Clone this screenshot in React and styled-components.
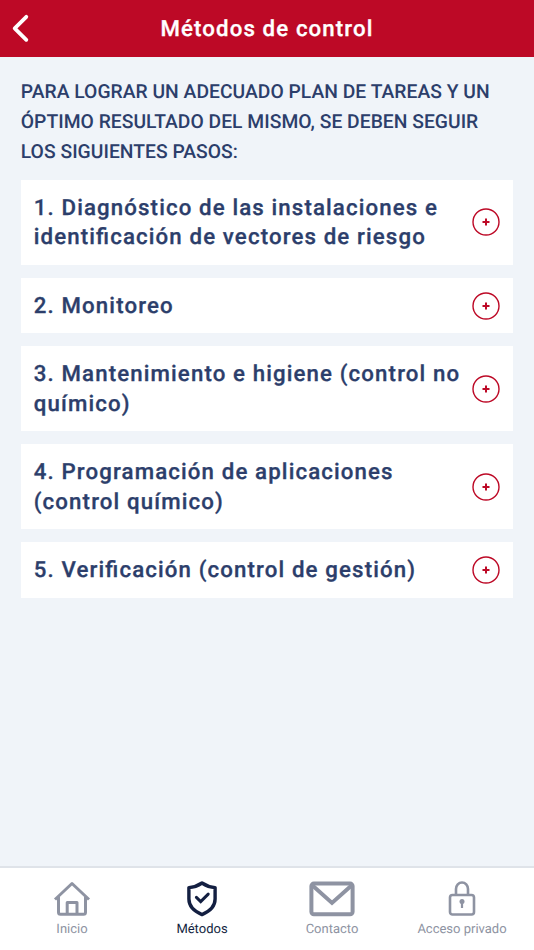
import React, { Component } from "react";
import styled, { createGlobalStyle } from "styled-components";

const GlobalStyle = createGlobalStyle`
  * {
    box-sizing: border-box;
  }
  body {
    margin: 0;
    font-family: Roboto, "Liberation Sans", sans-serif;
    text-rendering: geometricPrecision;
  }
`;
const Container = styled.div`
  display: flex;
  flex-direction: column;
  height: 100vh;
  background-color: #f0f4f9;
`;
const Header = styled.header`
  display: grid;
  grid-template-columns: 40px 1fr 40px;
  align-items: center;
  height: 57px;
  background-color: #bd0926;
  color: #fff;
`;
const BackButton = styled.button`
  display: flex;
  height: 57px;
  padding: 0;
  border: 0;
  background: none;
  color: inherit;
`;
const Title = styled.h1`
  margin: 0;
  padding-top: 1px;
  font-size: 22.25px;
  font-weight: 500;
  letter-spacing: 1.1px;
  text-align: center;
  -webkit-text-stroke: 0.3px;
`;
const Content = styled.main`
  flex: 1;
  padding: 20.2px 20.8px;
  color: #2c3e6b;
`;
const Intro = styled.p`
  margin: 0 0 13.5px;
  font-size: 19.3px;
  font-weight: 500;
  line-height: 29.67px;
  letter-spacing: 0.02px;
  text-transform: uppercase;
`;
const List = styled.div`
  display: flex;
  flex-direction: column;
  gap: 12.65px;
`;
const Card = styled.div`
  display: flex;
  align-items: center;
  justify-content: space-between;
  padding: 14px 13px 12px;
  background-color: #fff;
`;
const CardTitle = styled.h2`
  flex: 1;
  margin: 0;
  font-size: 22.25px;
  font-weight: 500;
  line-height: 29.67px;
  letter-spacing: 1.12px;
  font-feature-settings: "liga" 1;
  -webkit-text-stroke: 0.3px;
`;
const PlusButton = styled.button`
  display: flex;
  width: 28px;
  height: 28px;
  margin: -2px 0 0 9px;
  padding: 0;
  border: 0;
  background: none;
  color: #bd0926;
`;
const TabBar = styled.nav`
  display: grid;
  grid-template-columns: repeat(4, 130px);
  justify-content: center;
  height: 84px;
  border-top: 2px solid #dfe3e9;
  background-color: #fff;
`;
const Tab = styled.a`
  display: flex;
  flex-direction: column;
  align-items: center;
  padding-top: 12px;
  color: ${props => (props.$active ? "#131f41" : "#8e93a2")};
`;
const TabLabel = styled.span`
  margin-top: 3px;
  font-size: 13px;
  line-height: 18px;
`;

const HomeIcon = () => (
  <svg width="38" height="38" viewBox="0 0 38 38" fill="none" stroke="currentColor" strokeWidth="3">
    <path d="M2 19.5 19 3.5 36 19.5" strokeLinejoin="round" />
    <path d="M5.5 17v15.3q0 2 2 2h23q2 0 2-2V17" />
    <path d="M14.2 34V22.5h9.8V34" strokeLinejoin="round" />
  </svg>
);
const ShieldIcon = () => (
  <svg width="32" height="38" viewBox="0 0 32 38" fill="none" stroke="currentColor" strokeWidth="3.4">
    <path d="M16 3C11.5 6 7 7.3 2.9 7.6V19c0 7.2 5.5 12.4 13.1 15.6C23.6 31.4 29.1 26.2 29.1 19V7.6C25 7.3 20.5 6 16 3Z" strokeLinejoin="round" />
    <path d="m10.4 17.4 4.3 4.2 7.5-7.5" strokeWidth="3" strokeLinecap="round" />
  </svg>
);
const MailIcon = () => (
  <svg width="46" height="38" viewBox="0 0 46 38" fill="none" stroke="currentColor" strokeWidth="4">
    <rect x="2.4" y="3.6" width="41.2" height="30.6" rx="2.5" />
    <path d="m3.5 5.4 19.5 17.5 19.5-17.5" />
  </svg>
);
const LockIcon = () => (
  <svg width="28" height="38" viewBox="0 0 28 38" fill="none" stroke="currentColor" strokeWidth="2.6">
    <rect x="2" y="15" width="24" height="19.5" rx="2.5" />
    <path d="M8 15V9a6 6.5 0 0 1 12 0v6" />
    <circle cx="14" cy="21.6" r="2.5" fill="currentColor" stroke="none" />
    <path d="M14 21.6V28" strokeWidth="2.2" />
  </svg>
);

const steps = [
  "1. Diagnóstico de las instalaciones e identificación de vectores de riesgo",
  "2. Monitoreo",
  "3. Mantenimiento e higiene (control no químico)",
  "4. Programación de aplicaciones (control químico)",
  "5. Verificación (control de gestión)"
];

const tabs = [
  { label: "Inicio", Icon: HomeIcon },
  { label: "Métodos", Icon: ShieldIcon },
  { label: "Contacto", Icon: MailIcon },
  { label: "Acceso privado", Icon: LockIcon }
];

class App extends Component {
  constructor(props) {
    super(props);
    this.state = {
      tab: "Métodos"
    };
  }

  render() {
    return (
      <Container>
        <GlobalStyle />
        <Header>
          <BackButton>
            <svg width="40" height="57" viewBox="0 0 40 57" fill="none" stroke="currentColor" strokeWidth="3.8" strokeLinecap="round" strokeLinejoin="round">
              <path d="M26.3 16.8 14.7 28.3 26.3 39.8" />
            </svg>
          </BackButton>
          <Title>Métodos de control</Title>
        </Header>
        <Content>
          <Intro>Para lograr un adecuado plan de tareas y un óptimo resultado del mismo, se deben seguir los siguientes pasos:</Intro>
          <List>
            {steps.map(step => (
              <Card key={step}>
                <CardTitle>{step}</CardTitle>
                <PlusButton>
                  <svg width="28" height="28" viewBox="0 0 28 28" fill="none" stroke="currentColor">
                    <circle cx="14" cy="14" r="13" strokeWidth="1.4" />
                    <path d="M14 10.5v7M10.5 14h7" strokeWidth="2" />
                  </svg>
                </PlusButton>
              </Card>
            ))}
          </List>
        </Content>
        <TabBar>
          {tabs.map(({ label, Icon }) => (
            <Tab key={label} $active={label === this.state.tab} onClick={() => this.setState({ tab: label })}>
              <Icon />
              <TabLabel>{label}</TabLabel>
            </Tab>
          ))}
        </TabBar>
      </Container>
    );
  }
}

export default App;
